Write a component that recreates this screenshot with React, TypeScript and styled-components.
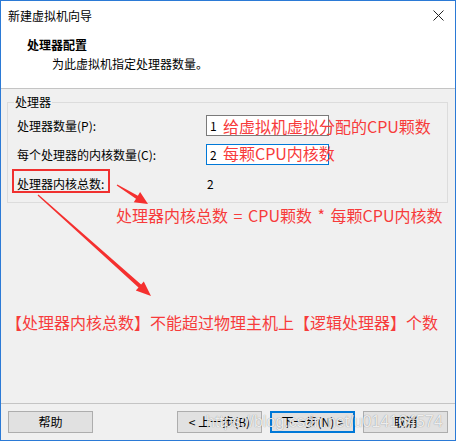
import React from "react";
import styled, { createGlobalStyle } from "styled-components";

const Global = createGlobalStyle`
  html, body { margin: 0; padding: 0; background: #ffffff; overflow: hidden; }
  * { box-sizing: border-box; }
`;

const UI_FONT = `"Noto Sans CJK SC", "Noto Sans", "Liberation Sans", sans-serif`;

const Window = styled.div`
  position: relative;
  width: 456px;
  height: 441px;
  border: 1px solid #2b7ad6;
  background: #f0f0f0;
  display: flex;
  flex-direction: column;
  font-family: ${UI_FONT};
  font-size: 12px;
  color: #000;
`;

const Header = styled.div`
  height: 88px;
  background: #ffffff;
  border-bottom: 1px solid #c4c4c4;
  display: flex;
  flex-direction: column;
`;

const TitleBar = styled.div`
  height: 29px;
  display: flex;
  align-items: center;
  justify-content: space-between;
  padding: 0 11px 0 7px;
`;

const Title = styled.span`
  line-height: 16px;
`;

const CloseIcon = styled.svg`
  width: 11px;
  height: 11px;
  display: block;
`;

const Heading = styled.div`
  margin: 7px 0 0 26px;
  font-weight: 700;
  line-height: 16px;
`;

const SubHeading = styled.div`
  margin: 3px 0 0 51px;
  line-height: 16px;
`;

const Body = styled.div`
  flex: 1;
  padding: 13px 7px 0 6px;
`;

const GroupBox = styled.div`
  border: 1px solid #dcdcdc;
  padding: 0 0 8px 9px;
`;

const Legend = styled.div`
  width: fit-content;
  margin: -9px 0 0 -3px;
  padding: 0 1px;
  background: #f0f0f0;
  line-height: 16px;
`;

const Rows = styled.div`
  margin-top: 5px;
  display: grid;
  grid-template-columns: 189px 123px;
  grid-auto-rows: 21px;
  row-gap: 8px;
  align-items: center;
`;

const Label = styled.span`
  line-height: 16px;
`;

const Field = styled.div<{ $focused?: boolean }>`
  height: 21px;
  border: 1px solid ${(p) => (p.$focused ? "#0078d7" : "#7a7a7a")};
  background: #fff;
  padding-left: 3px;
  display: flex;
  align-items: center;
  line-height: 16px;
`;

const Value = styled.span`
  padding-left: 1px;
  line-height: 16px;
`;

const Footer = styled.div`
  height: 37px;
  border-top: 1px solid #c4c4c4;
  padding: 7px 7px 0 7px;
  display: flex;
  align-items: flex-start;
  justify-content: space-between;
`;

const ButtonGroup = styled.div`
  display: flex;
  gap: 8px;
`;

const Button = styled.button<{ $default?: boolean }>`
  width: 85px;
  height: 22px;
  margin: 0;
  padding: 0;
  font-family: ${UI_FONT};
  font-size: 12px;
  color: #000;
  background: #e1e1e1;
  border: 1px solid ${(p) => (p.$default ? "#0078d7" : "#adadad")};
  box-shadow: ${(p) => (p.$default ? "inset 0 0 0 1px #0078d7" : "none")};
  line-height: 16px;
`;

const Overlay = styled.div`
  position: absolute;
  top: -1px;
  left: -1px;
  width: 456px;
  height: 441px;
  pointer-events: none;
`;

const Note = styled.div<{ $x: number; $y: number; $spaced?: boolean }>`
  position: absolute;
  left: ${(p) => p.$x}px;
  top: ${(p) => p.$y}px;
  white-space: pre;
  font-family: "Noto Sans CJK SC", "Noto Sans", sans-serif;
  font-size: 16px;
  line-height: 16px;
  word-spacing: ${(p) => (p.$spaced ? "2px" : "0")};
  color: #f73b3b;
`;

const Highlight = styled.div`
  position: absolute;
  left: 12px;
  top: 169px;
  width: 98px;
  height: 24px;
  border: 2px solid #f0302f;
`;

const ArrowLayer = styled.svg`
  position: absolute;
  left: 0;
  top: 0;
  width: 456px;
  height: 441px;
`;

const Watermark = styled.div`
  position: absolute;
  left: 206px;
  top: 413px;
  font-family: "Liberation Sans", Arial, sans-serif;
  font-size: 16px;
  line-height: 18px;
  white-space: nowrap;
  color: rgba(255, 255, 255, 0.85);
  text-shadow: 0 0 1px rgba(0, 0, 0, 0.45);
`;

function arrowPoints(x1: number, y1: number, x2: number, y2: number, L = 14, W = 6, s = 2) {
  const dx = x2 - x1;
  const dy = y2 - y1;
  const len = Math.hypot(dx, dy);
  const ux = dx / len;
  const uy = dy / len;
  const nx = -uy;
  const ny = ux;
  const bx = x2 - ux * L;
  const by = y2 - uy * L;
  const pts = [
    [x1 + nx * 0.6, y1 + ny * 0.6],
    [bx + nx * s, by + ny * s],
    [bx + nx * W, by + ny * W],
    [x2, y2],
    [bx - nx * W, by - ny * W],
    [bx - nx * s, by - ny * s],
    [x1 - nx * 0.6, y1 - ny * 0.6],
  ];
  return pts.map((p) => `${p[0].toFixed(1)},${p[1].toFixed(1)}`).join(" ");
}

export default function App() {
  return (
    <>
      <Global />
      <Window>
        <Header>
          <TitleBar>
            <Title>新建虚拟机向导</Title>
            <CloseIcon viewBox="0 0 11 11">
              <path d="M0.5 0.5 L10.5 10.5 M10.5 0.5 L0.5 10.5" stroke="#222" strokeWidth="1" fill="none" />
            </CloseIcon>
          </TitleBar>
          <Heading>处理器配置</Heading>
          <SubHeading>为此虚拟机指定处理器数量。</SubHeading>
        </Header>
        <Body>
          <GroupBox>
            <Legend>处理器</Legend>
            <Rows>
              <Label>处理器数量(P):</Label>
              <Field>1</Field>
              <Label>每个处理器的内核数量(C):</Label>
              <Field $focused>2</Field>
              <Label>处理器内核总数:</Label>
              <Value>2</Value>
            </Rows>
          </GroupBox>
        </Body>
        <Footer>
          <Button>帮助</Button>
          <ButtonGroup>
            <Button>&lt; 上一步(B)</Button>
            <Button $default>下一步(N) &gt;</Button>
            <Button>取消</Button>
          </ButtonGroup>
        </Footer>
        <Overlay>
          <Highlight />
          <Note $x={223} $y={118}>给虚拟机虚拟分配的CPU颗数</Note>
          <Note $x={223} $y={145}>每颗CPU内核数</Note>
          <Note $x={116} $y={207} $spaced>处理器内核总数 = CPU颗数 * 每颗CPU内核数</Note>
          <Note $x={6} $y={314}>【处理器内核总数】不能超过物理主机上【逻辑处理器】个数</Note>
          <ArrowLayer viewBox="0 0 456 441">
            <polygon points={arrowPoints(117, 185, 148, 204, 13, 6, 1.8)} fill="#f5302f" />
            <polygon points={arrowPoints(38, 195, 151, 296, 15, 6, 2)} fill="#f5302f" />
          </ArrowLayer>
          <Watermark>https://blog.csdn.net/u014164574</Watermark>
        </Overlay>
      </Window>
    </>
  );
}
